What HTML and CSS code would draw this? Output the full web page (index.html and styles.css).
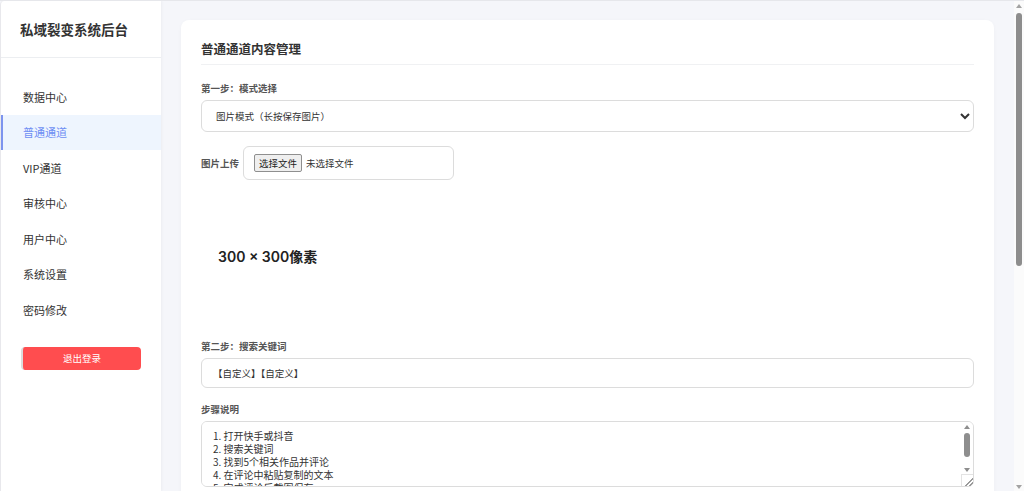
FILE: index.html
```html
<!DOCTYPE html>
<html lang="zh-CN">
<head>
<meta charset="utf-8">
<title>私域裂变系统后台</title>
<link rel="stylesheet" href="styles.css">
</head>
<body>
<div class="layout">
  <aside class="sidebar">
    <div class="brand">私域裂变系统后台</div>
    <nav class="menu">
      <a class="menu-item">数据中心</a>
      <a class="menu-item active">普通通道</a>
      <a class="menu-item">VIP通道</a>
      <a class="menu-item">审核中心</a>
      <a class="menu-item">用户中心</a>
      <a class="menu-item">系统设置</a>
      <a class="menu-item">密码修改</a>
    </nav>
    <button class="logout">退出登录</button>
  </aside>
  <main class="main">
    <section class="card">
      <h2 class="card-title">普通通道内容管理</h2>

      <div class="field">
        <label class="label">第一步：模式选择</label>
        <select class="control select">
          <option>图片模式（长按保存图片）</option>
          <option>文本模式</option>
        </select>
      </div>

      <div class="upload-row">
        <span class="label inline">图片上传</span>
        <div class="upload-box">
          <label class="file-btn">选择文件<input type="file" class="file-hidden"></label>
          <span class="file-name">未选择文件</span>
        </div>
      </div>

      <div class="preview">300 × 300像素</div>

      <div class="field">
        <label class="label">第二步：搜索关键词</label>
        <input class="control input" type="text" value="【自定义】【自定义】">
      </div>

      <div class="field">
        <label class="label">步骤说明</label>
        <div class="ta-wrap">
          <textarea class="control textarea">1. 打开快手或抖音
2. 搜索关键词
3. 找到5个相关作品并评论
4. 在评论中粘贴复制的文本
5. 完成评论后截图保存
6. 上传截图等待审核
7. 审核通过后领取奖励
8. 如有疑问请联系客服</textarea>
          <div class="ta-scroll">
            <span class="arrow up"></span>
            <span class="ta-thumb"></span>
            <span class="arrow down"></span>
          </div>
          <div class="ta-corner"></div>
        </div>
      </div>

      <div class="field">
        <label class="label">第三步：评论文本</label>
        <textarea class="control textarea tall">【自定义】</textarea>
      </div>

      <div class="field">
        <label class="label">第四步：上传截图说明</label>
        <input class="control input" type="text" value="请上传5张评论截图">
      </div>

      <div class="field">
        <label class="label">奖励说明</label>
        <input class="control input" type="text" value="审核通过后自动发放">
      </div>

      <button class="save">保存设置</button>
    </section>
  </main>
  <div class="page-scroll">
    <span class="arrow up"></span>
    <span class="page-thumb"></span>
    <span class="arrow down"></span>
  </div>
</div>
</body>
</html>
```
FILE: styles.css
```css
* { box-sizing: border-box; }
html, body { margin: 0; padding: 0; height: 100%; overflow: hidden; }
body {
  font-family: "Noto Sans CJK SC", "Noto Sans", sans-serif;
  color: #333;
  background: #f5f6fa;
  border-top: 1px solid #e6e7eb;
}
.layout { display: flex; height: calc(100vh - 1px); position: relative; }

.sidebar {
  width: 161px;
  flex: 0 0 161px;
  background: #fff;
  height: 100%;
  border-left: 1px solid #e8e8ec;
  border-top-left-radius: 4px;
  box-shadow: 1px 0 3px rgba(0,0,0,0.04);
}
.brand {
  height: 57px;
  padding: 0 0 0 19px;
  display: flex;
  align-items: center;
  font-size: 13.5px;
  font-weight: 700;
  color: #333;
  border-bottom: 1px solid #eceef1;
}
.menu { display: flex; flex-direction: column; padding-top: 21px; }
.menu-item {
  height: 35.5px;
  display: flex;
  align-items: center;
  padding-left: 20px;
  border-left: 2px solid transparent;
  font-size: 11px;
  color: #333;
}
.menu-item.active {
  background: #eef5fe;
  border-left-color: #7d94ee;
  color: #6e8ef4;
}
.logout {
  display: block;
  margin: 19px 20px 0 20px;
  width: 120px;
  height: 23px;
  border: none;
  border-left: 2px solid #dcdcdc;
  border-radius: 4px;
  background: #ff4d4f;
  color: #fff;
  font-family: inherit;
  font-size: 9.5px;
  padding: 0;
}

.main {
  flex: 1;
  height: 100%;
  overflow-y: auto;
  padding: 19px 20px 20px 20px;
}

/* page scrollbar drawn over the right edge */
.page-scroll {
  flex: 0 0 10px;
  width: 10px;
  height: 100%;
  background: #fbfbfb;
  display: flex;
  flex-direction: column;
  align-items: center;
  padding: 3px 0 2px;
}
.page-thumb {
  width: 6px;
  height: 253px;
  margin-top: 5px;
  border-radius: 3px;
  background: #8d8d8d;
}
.arrow {
  width: 0;
  height: 0;
  border-left: 3px solid transparent;
  border-right: 3px solid transparent;
}
.arrow.up { border-bottom: 4px solid #a3a3a3; }
.arrow.down { border-top: 4px solid #a3a3a3; margin-top: auto; }

.card {
  background: #fff;
  border-radius: 8px;
  padding: 20px;
  box-shadow: 0 1px 4px rgba(0,0,0,0.03);
}
.card-title {
  margin: 0 0 16px 0;
  padding: 0 0 7px 0;
  font-size: 12.5px;
  font-weight: 700;
  line-height: 17px;
  color: #333;
  border-bottom: 1.5px solid #f0f1f3;
}
.field { display: flex; flex-direction: column; margin-bottom: 14px; }
.label {
  font-size: 9.5px;
  font-weight: 700;
  color: #555;
  line-height: 14px;
  margin-bottom: 5px;
}
.label.inline { margin: 0 4px 0 0; }
.control {
  width: 100%;
  border: 1px solid #dcdcdc;
  border-radius: 6px;
  font-family: inherit;
  color: #333;
  background: #fff;
}
.select {
  height: 32px;
  font-size: 9.5px;
  padding: 0 6px 0 10px;
}
.input {
  height: 30px;
  font-size: 9.5px;
  padding: 0 11px;
}
.textarea {
  display: block;
  height: 66px;
  font-size: 10px;
  line-height: 13px;
  padding: 7px 22px 7px 11px;
  resize: none;
}
.textarea.tall { height: 90px; }

.ta-wrap { position: relative; }
.ta-scroll {
  position: absolute;
  top: 4px;
  right: 2px;
  width: 10px;
  bottom: 15px;
  display: flex;
  flex-direction: column;
  align-items: center;
}
.ta-scroll .arrow.up { border-bottom-color: #8e8e8e; }
.ta-scroll .arrow.down { border-top-color: #8e8e8e; }
.ta-thumb {
  width: 6px;
  height: 24px;
  margin-top: 4px;
  border-radius: 3px;
  background: #8e8e8e;
}
.ta-corner {
  position: absolute;
  right: 1px;
  bottom: 1px;
  width: 12px;
  height: 12px;
  border-left: 1px solid #e3e3e3;
  border-top: 1px solid #e3e3e3;
  background:
    linear-gradient(135deg, transparent 62%, #9a9a9a 62%, #9a9a9a 70%, transparent 70%, transparent 80%, #9a9a9a 80%, #9a9a9a 88%, transparent 88%);
}

.upload-row { display: flex; align-items: center; margin-top: 0; }
.upload-box {
  width: 211px;
  height: 34px;
  border: 1px solid #dcdcdc;
  border-radius: 6px;
  padding: 0 10px;
  display: flex;
  align-items: center;
  gap: 4px;
}
.file-btn {
  display: inline-flex;
  align-items: center;
  height: 18px;
  padding: 0 4px;
  background: #efefef;
  border: 1px solid #8f8f8f;
  border-radius: 2px;
  font-size: 9.5px;
  color: #222;
}
.file-hidden { display: none; }
.file-name { font-size: 9.5px; color: #333; }

.preview {
  height: 130px;
  display: flex;
  align-items: center;
  padding-left: 17px;
  margin: 11px 0 18px 0;
  font-family: "Inter", "Noto Sans CJK SC", sans-serif;
  font-size: 14px;
  font-weight: 600;
  color: #222;
}

.save {
  margin-top: 6px;
  height: 30px;
  width: 100%;
  border: none;
  border-radius: 6px;
  background: #6e8ef4;
  color: #fff;
  font-family: inherit;
  font-size: 10px;
}
```
